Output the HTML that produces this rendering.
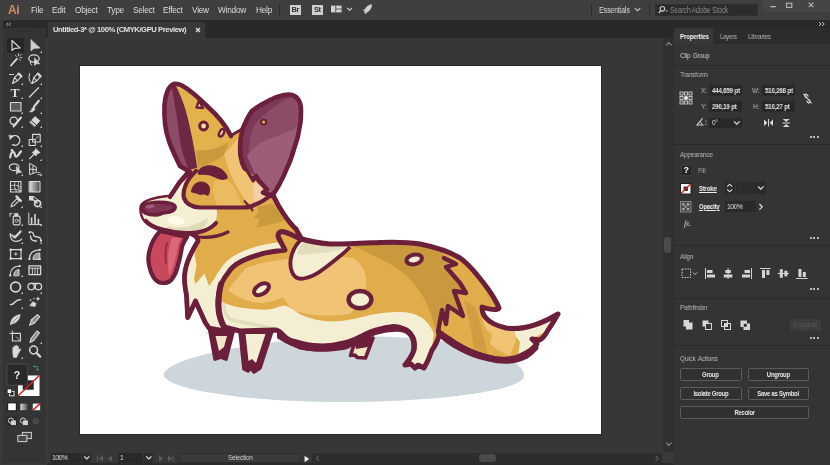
<!DOCTYPE html>
<html>
<head>
<meta charset="utf-8">
<title>Adobe Illustrator</title>
<style>
*{box-sizing:border-box;margin:0;padding:0}
html,body{width:830px;height:465px;overflow:hidden;background:#2a2a2a}
body{font-family:"Liberation Sans",sans-serif;color:#d6d6d6;position:relative}
.abs{position:absolute}
#app{position:absolute;left:0;top:0;width:830px;height:465px;overflow:hidden;background:#3a3a3a}
/* menu bar */
#menubar{left:0;top:0;width:830px;height:19.500px;background:#3f3f3f}
#menubar .mi{will-change:transform;position:absolute;top:5px;font-size:8.3px;line-height:10px;color:#dcdcdc;letter-spacing:-0.25px;white-space:nowrap}
#ailogo{will-change:transform;position:absolute;left:7.500px;top:2.500px;font-size:12px;line-height:15px;font-weight:bold;color:#d88a63;letter-spacing:-0.5px}
/* tabs row */
#tabrow{left:45.500px;top:19.500px;width:784.500px;height:18.500px;background:#292929}
#tab{left:2.500px;top:2.500px;width:157px;height:16px;background:#383838}
#tab span{will-change:transform;position:absolute;left:5px;top:3px;font-size:7.6px;line-height:9px;font-weight:bold;color:#e2e2e2;letter-spacing:-0.4px;white-space:nowrap}
/* canvas */
#canvas{left:48px;top:38px;width:615px;height:427px;background:#373737}
#artboard{left:80.400px;top:66px;width:520.700px;height:367.800px;background:#fff;box-shadow:0 0 0 1px #282828}
#vscroll{left:662.500px;top:38px;width:11.500px;height:414px;background:#303030}
#status{left:47px;top:452px;width:627px;height:13px;background:transparent}
/* toolbar */
#toolbar{left:3px;top:20px;width:42.600px;height:443px;background:#343434}
/* right panel */
#rpanel{left:674px;top:28px;width:156px;height:437px;background:#343434}

.t{will-change:transform;position:absolute;white-space:nowrap;font-size:7.4px;line-height:10px;letter-spacing:-0.2px;transform:scaleX(.86);transform-origin:0 50%}
.inp{position:absolute;background:#272727;border:1px solid #2a2a2a}
.sep{position:absolute;left:674px;width:156px;height:1px;background:#2a2a2a}
.btn{will-change:transform;position:absolute;border:1px solid #5c5c5c;border-radius:1.5px;background:#313131;color:#e6e6e6;font-size:7.4px;font-weight:bold;letter-spacing:-0.3px;text-align:center;line-height:11px;white-space:nowrap}
.dots{position:absolute;width:9px;height:3px}
.dots i{position:absolute;top:0;width:2.2px;height:2.2px;border-radius:50%;background:#e8e8e8}
</style>
</head>
<body>
<div id="app">
  <div id="menubar" class="abs">
    <div id="ailogo">Ai</div>
    <div class="mi" style="left:31px">File</div>
    <div class="mi" style="left:52px">Edit</div>
    <div class="mi" style="left:75px">Object</div>
    <div class="mi" style="left:107px">Type</div>
    <div class="mi" style="left:133px">Select</div>
    <div class="mi" style="left:163px">Effect</div>
    <div class="mi" style="left:192px">View</div>
    <div class="mi" style="left:218px">Window</div>
    <div class="mi" style="left:256px">Help</div>

    <div class="abs" style="left:279px;top:4px;width:1px;height:12px;background:#2c2c2c"></div>
    <div class="abs" style="left:289.5px;top:5px;width:10.5px;height:10px;background:#cfcfcf;color:#333;font-size:7.5px;font-weight:bold;line-height:10px;text-align:center;letter-spacing:-0.4px;will-change:transform">Br</div>
    <div class="abs" style="left:311.5px;top:5px;width:10.5px;height:10px;background:#cfcfcf;color:#333;font-size:7.5px;font-weight:bold;line-height:10px;text-align:center;letter-spacing:-0.4px;will-change:transform">St</div>
    <svg class="abs" style="left:329px;top:3px" width="48" height="14" viewBox="329 3 48 14">
      <rect x="331" y="5.6" width="4.4" height="6.8" fill="#d2d2d2"/>
      <rect x="336.2" y="5.6" width="5.4" height="3" fill="#d2d2d2"/>
      <rect x="336.2" y="9.4" width="5.4" height="3" fill="#d2d2d2"/>
      <path d="M347.2,8 L349.6,10.3 L352,8" fill="none" stroke="#d2d2d2" stroke-width="1.1"/>
      <path d="M372,4.2 C368.500,4.6 365.800,6.800 364.600,9.600 L362.200,10.200 L364.600,11 L365,12.600 L365.800,14.800 L366.800,12.400 C369.600,11.400 371.800,8.400 372,4.200 Z M365.600,10.200 L363.200,13.600 L366.400,11.600 Z" fill="#cfcfcf"/>
    </svg>
    <div class="abs" style="left:591px;top:4px;width:1px;height:12px;background:#2c2c2c"></div>
    <div class="mi" style="left:598.5px;color:#d8d8d8;transform:scaleX(.87);transform-origin:0 50%">Essentials</div>
    <svg class="abs" style="left:634px;top:7px" width="8" height="6" viewBox="0 0 8 6"><path d="M1,1.2 L3.6,3.800 L6.200,1.200" fill="none" stroke="#d2d2d2" stroke-width="1.1"/></svg>
    <div class="abs" style="left:648.5px;top:4px;width:1px;height:12px;background:#2c2c2c"></div>
    <div class="abs" style="left:654.5px;top:4px;width:103px;height:12px;background:#2b2b2b;border:1px solid #303030"></div>
    <svg class="abs" style="left:658px;top:5px" width="12" height="10" viewBox="0 0 12 10"><circle cx="4.400" cy="3.800" r="2.300" fill="none" stroke="#c8c8c8" stroke-width="1.100"/><path d="M2.800,5.600 L0.800,8" stroke="#c8c8c8" stroke-width="1.300" fill="none"/><path d="M7.600,5.600 L10,5.600 L8.800,7 Z" fill="#c8c8c8"/></svg>
    <div class="mi" style="left:669.5px;color:#8c8c8c;transform:scaleX(.82);transform-origin:0 50%">Search Adobe Stock</div>
    <div class="abs" style="left:762px;top:0;width:68px;height:11.500px;background:#454545"></div>
    <svg class="abs" style="left:762px;top:0" width="68" height="12" viewBox="762 0 68 12">
      <rect x="770.400" y="6" width="5.400" height="1.300" fill="#b8b8b8"/>
      <rect x="786.600" y="3.200" width="5.200" height="4.200" fill="none" stroke="#b8b8b8" stroke-width="1.100"/>
      <path d="M808.800,2.600 L813.400,7.200 M813.400,2.600 L808.800,7.200" stroke="#b8b8b8" stroke-width="1.100"/>
    </svg>
  </div>
  <div id="tabrow" class="abs">
    <div id="tab" class="abs"><span>Untitled-3* @ 100% (CMYK/GPU Preview)</span><svg class="abs" style="left:146.500px;top:5px" width="6" height="6" viewBox="0 0 6 6"><path d="M1,1 L5,5 M5,1 L1,5" stroke="#e2e2e2" stroke-width="1.200"/></svg></div>
  </div>
  <div id="canvas" class="abs"></div>
  <div id="artboard" class="abs"></div>
<svg id="corgi" class="abs" style="left:80px;top:66px" width="521" height="368" viewBox="80 66 521 368">
<defs>
  <clipPath id="cpBody"><path id="bodyP" d="M300,238.5 C294,236 288,232.5 282,231.5 C279,232 278,234 278,236 C280,241 283,246 285,250 C276,251 266,252 258,255 C251,257 246,259 242,261 C236,264 231,268 228,273 C224,278 221,283 220,289 C218,294 218,300 218,305 C218,312 220,320 224,327 L240,331 L276,330 C279,331 281,332 282,334 C287,339 293,344 300,347 C310,349 320,349.5 330,348 C337,347 344,345 350,342 C357,339 363,335 370,332 C376,330 383,328 390,327 C395,326 400,327 404,329 C407,330 410,332 412,336 C414,339 415,344 414,350 C412,356 408,361 405,365 L411,364 L415,368 L418,365 L424,368 C427,363 430,356 432,350 C435,346 438,340 440,333 L448,338 C452,341 458,345 464,348 C471,352 480,355 488,357 C494,359 501,360 508,359 C513,359 519,357 524,354 C528,352 533,349 537,344 L532,339 L540,340 C543,338 546,334 548,330 C551,326 554,321 558,314 C538,326 520,330 506,328 C498,326 490,323 486,318 C484,316 482,312 482,307 C488,309 497,311 499,308 C497,303 493,296 488,289 C480,278 470,265 460,258 C450,252 435,247 420,244 C410,242.5 395,242 380,242.5 C368,243 340,244.5 330,244 C318,243 308,241 300,238.5 Z"/></clipPath>
  <clipPath id="cpNeck"><path id="neckP" d="M192,168 L180,182 L170,197 C160,198 146,200 142,206 C141,212 143,218 146,221 C152,228 170,233 186,233 C195,233 198,238 198,241 C193,249 189,258 187.500,262 C185.500,268 184.500,274 184.500,278 C184.500,285 185.500,290 186.500,295 L187.700,317.500 L195.500,301 L205,322 L209,328 L232,332 L302,240 L296,229 C288,222 278,206 274,197 L256,168 Z"/></clipPath>
  <clipPath id="cpEarL"><path id="earLP" d="M174,84 C168,86 165,96 164.5,105 C164,116 165,130 169,141 C172,150 176,158 180,166 L192,172 L232,172 L232,136 C226,126 216,114 208,107 C200,99 190,90 182,85.5 C179,84 176,83.5 174,84 Z"/></clipPath>
  <clipPath id="cpEarR"><path id="earRP" d="M243,128 C246,121 249,115 252,111 C257,107 262,104 268,101 C273,98 279,96 284,95 C289,94 294,95 296.500,97.500 C300,101 301,105 301,110 C301,115 301,120 300,125 C299,133 297,141 294,149 C292,156 290,162 287,168 C283,178 278,188 272,196 L263,192.500 L267,189.500 L262.500,184.500 L259,181 L256,176 L253,180 C249,176 247,173 245.500,170 C242,164 241,160 240.500,156 C240,150 240,145 240.500,140 C241,136 242,132 243,128 Z"/></clipPath>
</defs>
<!-- shadow -->
<path d="M163.500,374 C168,364 195,355.500 230,349 C270,342 310,337 360,336.500 C420,336 470,343 500,355 C515,361 524,368 524,376 C524,390 440,402 344,402 C250,402 163.500,390 163.500,374 Z" fill="#ccd6db"/>
<!-- far legs -->
<path d="M209,326 L215,359 L221,357 L226,359 L234,328 Z" fill="#6b1f3b" stroke="#6b1f3b" stroke-width="3.6" stroke-linejoin="round"/>
<path d="M215.5,336 L219,351 L224,347 L227,336 Z" fill="#efe6c6"/>
<path d="M356,338 L350.500,355.500 L354.500,355 L357.500,357.500 L365.500,358 L373,338 Z" fill="#efe6c6" stroke="#6b1f3b" stroke-width="3.600" stroke-linejoin="round"/>
<path d="M353,338 L356,349 L368,347 L374,338 Z" fill="#6b1f3b"/>
<!-- neck / chest fur -->
<use href="#neckP" fill="#e0ad4a" stroke="#6b1f3b" stroke-width="4.2" stroke-linejoin="round"/>
<g clip-path="url(#cpNeck)">
  <path d="M257,207 L272,203.500 L287,220 L278,222.500 L266,225.500 L256.500,227.500 L260,218.500 L253.500,218 L258.500,212.500 Z" fill="#c9993d"/>
  <path d="M197,243 L194.500,254 L196.500,265.500 L194,279 L195.500,284 L204.500,273.500 L209,286 L214,279 L214,296 L212,310 L224,334 L176,334 L174,280 L188,245 Z" fill="#f4eed3"/>
  <path d="M285,250 C276,251 266,252 258,255 C251,257 246,259 242,261 C236,264 231,268 228,273 C224,278 221,283 220,289 C218,294 218,300 218,305 C218,312 220,320 224,327" fill="none" stroke="#f4eed3" stroke-width="17"/>
</g>
<use href="#neckP" fill="none" stroke="#6b1f3b" stroke-width="4.800" stroke-linejoin="round"/>
<!-- tongue -->
<path d="M160,231 C154,238 151,244 150,249 C148,255 148,260 149,265 C150,271 152,275 154,278 C157,282 160,283 163,283 C167,283 170,282 172,279 C175,275 177,270 178,265 C180,259 181,253 182,247 C183,243 185,240 187,237 Z" fill="#c8495c" stroke="#6b1f3b" stroke-width="4.2" stroke-linejoin="round"/>
<path d="M172,238 C168,248 167,262 169,275 C173,270 176,258 178,246 C179,242 180,240 182,238 Z" fill="#dd6877"/>
<path d="M167,243 C165,251 165,257 166,263" fill="none" stroke="#8e2f47" stroke-width="1.8" stroke-linecap="round"/>
<!-- body -->
<use href="#bodyP" fill="#e0ad4a"/>
<g clip-path="url(#cpBody)">
  <path d="M346,243 C362,250 380,258 395,267 C412,278 426,296 432,318 L438,336 L442,310 L446,324 L448,306 L463,316 L454,291 L466,293 L460,283 L446,267 L456,264 L444,258 L440,244 L380,236 Z" fill="#c9993d"/>
  
  <path d="M246,268 C240,275 232,284 228,290 C236,297 250,302.500 260.600,302.800 C268,303 278,300.500 282.500,297 L284,298.500 C286,301 288,305 291,308.700 C295,311 302,313 311,314.600 C320,316 335,316 350,313.700 C356,308 364,298 366,286 C368,275 362,262 352,258 C330,254 290,257 268,262 C258,264 250,266 246,268 Z" fill="#f1c374"/>
  <path d="M212,294 L224,303 C232,306 238,307.500 244,308 C252,309 262,310 268,309.500 C274,309 280,306 284,305.500 C290,306 296,313 304,316 C312,319 320,321 330,321.500 C345,321.500 358,318 370,315 C385,312 400,311 410,313 C424,316 430,324 434,334 L428,372 L400,372 L330,358 L250,345 L214,338 Z" fill="#f4eed3"/>
  <path d="M223.500,304 C224,312 226,317 231,319.500 C240,322.500 255,324 278,329.500" fill="none" stroke="#e4dec0" stroke-width="3.600" stroke-linecap="round"/>
  <path d="M464,300 L476,308 L488,354 L474,349 C472,332 468,314 464,300 Z" fill="#d09e40"/>
  <!-- tail tip -->
  <path d="M516,322 L514,334 L520,342 L518,356 L545,346 L532,339 L548,330 L562,310 Z" fill="#f4eed3"/>
  <path d="M482,318 L486,330 L492,334 L490,344 L498,350 L510,356 L516,340 L514,326 L500,326 Z" fill="#f1c374"/>
</g>
<!-- saddle -->
<path d="M302,239 C297,243 294,248 292,254 C290,260 290,267 292,272 C294,277 298,279.5 304,278.5 C311,277 317,274 322,270 C329,265 335,260 340,256 C344,253 347,250 350,247" fill="#f4eed3" stroke="#6b1f3b" stroke-width="3.8" stroke-linejoin="round"/>
<path d="M304,242 C300,246 298,250 297,254 C310,255 330,253 346,248 C330,246 315,244 304,242 Z" fill="#e2dcbc"/>
<!-- tail fur zigzag -->
<path d="M444,258 L456,264 L446,267 L460,283 L466,293 L454,291 L463,316 L448,306 L446,324 L442,310 L438,332" fill="none" stroke="#6b1f3b" stroke-width="4.400" stroke-linejoin="round" stroke-linecap="round"/>
<use href="#bodyP" fill="none" stroke="#6b1f3b" stroke-width="5" stroke-linejoin="round"/>
<!-- thick underside overlays -->
<path d="M277,330 C284,335 290,338 297,339.600 C303,341.500 308,342.500 313.700,343 C320,343.500 325,343.500 330.600,343 C337,342 342,341 347.500,339.600 C353,337.500 358,335.500 364,333 C370,330.500 375,328.500 381,327 C387,325.800 392,325.300 398,325.300 C404,326 409,328 412,332 C416,337 417,344 416,351 C414,357 411,362 408,366 L403,366 C407,361 410,356 411,351 C412,345 411,340 409,337 C407,334 404,332.500 400,332 C394,331.500 388,332.300 381,333.700 C375,335 370,337 364,340 C358,343 352,346.500 347.500,349 C342,350.500 337,351 330.600,351.400 C325,351.800 320,351.800 313.700,351.400 C308,350.800 303,349.800 297,348 C291,346 285,343.500 277,338 Z" fill="#6b1f3b"/>
<path d="M440,333.500 C446,339 452,343.500 460,347.500 C469,352.500 479,356 488,358 C495,359.800 502,360.600 508,360.400 C514,360 520,358.500 525,356 C529,353.500 532,351 535,347.500" fill="none" stroke="#6b1f3b" stroke-width="6.800" stroke-linecap="round"/>
<path d="M221,284 C219,291 218.500,298 218.500,305 C218.500,313 220.500,321 224.500,328" fill="none" stroke="#6b1f3b" stroke-width="6" stroke-linecap="round"/>
<!-- spots -->
<ellipse cx="261.500" cy="289.200" rx="8.200" ry="4.800" transform="rotate(-32 261.500 289.200)" fill="#f4eed3" stroke="#6b1f3b" stroke-width="4"/>
<ellipse cx="360" cy="299.600" rx="11.400" ry="8.600" fill="#f4eed3" stroke="#6b1f3b" stroke-width="4.400"/>
<ellipse cx="414.200" cy="259.400" rx="7.800" ry="4.800" transform="rotate(-12 414.200 259.400)" fill="#f4eed3" stroke="#6b1f3b" stroke-width="4"/>
<!-- near front leg -->
<path d="M240,331 L244,369 L248,371 L251,368 L254,372 L260,368 L272,331 Z" fill="#6b1f3b" stroke="#6b1f3b" stroke-width="3.6" stroke-linejoin="round"/>
<path d="M245.5,334 L248.5,361 L252,359 L256,363 L265.5,334 Z" fill="#f4eed3"/>
<!-- back leg cream -->
<path d="M418,330 C420,338 420,346 418,352 L414,361 L420,363 L428,352 C431,344 432,338 431,330 Z" fill="#f4eed3"/>
<!-- ears -->
<use href="#earLP" fill="#6e2745" />
<g clip-path="url(#cpEarL)">
  <path d="M172,88 C174,100 177,115 180,141 C182,152 185,160 188,168 L176,168 L160,130 L162,90 Z" fill="#8c4c68"/>
  <path d="M176,86 C182,98 187,112 190,128 C193,142 196,156 198,175 L236,175 L234,136 L208,106 L186,88 Z" fill="#e2b24c"/>
  <path d="M196,150 C208,152 220,148 232,140 L234,176 L198,176 C198,168 197,158 196,150 Z" fill="#c9993d"/>
</g>
<use href="#earRP" fill="#8c4c68"/>
<g clip-path="url(#cpEarR)">
  <path d="M240,126 C250,110 268,98 290,92 L300,94 C282,100 266,110 254,126 C249,136 248,150 250,162 L256,178 L238,176 Z" fill="#7a3a57"/>
  <path d="M247,156 C252,148 261,142 269,139 C280,135 291,131 302,124 L303,140 L276,199 L262,192 L256,176 Z" fill="#9d5d78"/>
</g>
<!-- ear spots -->
<path d="M199,100.5 L203,108 L196.5,107.5 Z" fill="#f6dfa2" stroke="#6b1f3b" stroke-width="2.4" stroke-linejoin="round"/>
<circle cx="203.600" cy="126" r="3.900" fill="#f6dfa2" stroke="#6b1f3b" stroke-width="3"/>
<ellipse cx="221.6" cy="132.8" rx="2.2" ry="4" transform="rotate(28 221.6 132.8)" fill="#f6dfa2" stroke="#6b1f3b" stroke-width="2.4"/>
<!-- forehead / head gold fill -->
<path d="M188,170 C200,168 215,162 224,155 L231,135 L243,128 L240,150 L246,172 L256,176 L263,184 L267,189.500 L263,192.500 L272,196 L256,207 L200,207 L184,198 Z" fill="#e0ad4a"/>
<!-- light region: between ears down the cheek -->
<path d="M242,130 C238,139 232,147 224,154 C226,162 230,172 236,184 C240,192 245,200 250,206 L262,201 L271,195.500 L263,192.500 L267,189.500 L262.500,184.500 L259,181 L256,176 L253,180 C249,176 247,173 245.500,170 C242,164 241,160 240.500,156 C240,150 240,145 240.500,140 C241,136 241.500,133 242,130 Z" fill="#f1c374"/>
<!-- peach -->
<path d="M247,190 C248,196 249,201 251,206 L262,201 L271,195.500 L263,192.500 L267,189.500 L262.500,184.500 L259,181 L253,184 Z" fill="#f3cfa4"/>
<path d="M231,135.500 L243,128.500" fill="none" stroke="#6b1f3b" stroke-width="3" stroke-linecap="round"/>
<path d="M174,84 C168,86 165,96 164.5,105 C164,116 165,130 169,141 C172,150 176,158 180,166 L190,172" fill="none" stroke="#6b1f3b" stroke-width="4.600" stroke-linejoin="round" stroke-linecap="round"/>
<path d="M174,84 C176,83.5 179,84 182,85.5 C190,90 200,99 208,107 C216,114 226,126 231,136" fill="none" stroke="#6b1f3b" stroke-width="4.600" stroke-linecap="round"/>
<use href="#earRP" fill="none" stroke="#6b1f3b" stroke-width="4.600" stroke-linejoin="round"/>
<circle cx="263.6" cy="122" r="2.6" fill="#e2b24c" stroke="#6b1f3b" stroke-width="2"/>
<!-- muzzle cream -->
<path d="M193,171 C186,178 182,188 183,198 C186,204 192,207 200,207.500 L216.500,207.500 C217.500,213 217,219 215,223.500 C209,230 197,234 186,233 C170,233 152,228 146,221 C143,218 141,212 142,206 C146,200 160,198 170,197 L180,182 Z" fill="#f4eed3"/>
<path d="M168,226 C178,229 192,228 208,218 C208,224 204,228 198,230.500 C188,233 176,232 166,229.500 Z" fill="#e0dab8"/><ellipse cx="176" cy="220.500" rx="8.500" ry="4" transform="rotate(8 176 220.500)" fill="#fdfbea"/>
<!-- face mask fill -->
<path d="M196,171 C187,179 182,190 184,198 C186,204 192,207 200,207.500 L242,207.500 C248,207.500 252,206.500 254,205 L252,186 L246,174 L224,157 Z" fill="#e0ad4a"/>
<path d="M225,158 C228,168 232,178 237,187 C241,194 245,200 249,206 L254,205 L253,184 L246,172 Z" fill="#f1c374"/>
<path d="M215,181 C221,177 229,180 233,186 C237,192 240,200 242,206.500 L218,206.500 C213,198 211,187 215,181 Z" fill="#ebbb62"/>
<path d="M196,171 C187,179 182,190 184,198 C186,204 192,207 200,207.500 L242,207.500 C248,207.500 252,206.500 254,205 C260,203 267,198.500 272,194" fill="none" stroke="#6b1f3b" stroke-width="4.200" stroke-linejoin="round" stroke-linecap="round"/>
<path d="M244,200.500 L249,206 L252.500,210.500 L250,205" fill="#6b1f3b" stroke="#6b1f3b" stroke-width="2" stroke-linejoin="round"/>
<!-- head outline left -->
<path d="M190,172 L180,182 L170,197" fill="none" stroke="#6b1f3b" stroke-width="4.2" stroke-linecap="round"/>
<!-- mouth line -->
<path d="M146,221 C152,228 170,233 186,233 C198,234 210,230 216,223" fill="none" stroke="#6b1f3b" stroke-width="4.2" stroke-linecap="round"/>
<path d="M198,237 C208,238 220,236 228,232" fill="none" stroke="#6b1f3b" stroke-width="3.2" stroke-linecap="round"/>
<!-- nose -->
<path d="M142.500,208.500 C142.500,204.800 148,202.600 158,202.200 C168,202 175.200,203.800 175.200,207.300 C175.200,210.500 170,212.300 164.500,212.800 C161,213.200 160,215 155,215 C147,215 142.500,212.300 142.500,208.500 Z" fill="#7d3553" stroke="#6b1f3b" stroke-width="3.600"/>
<ellipse cx="150" cy="206.400" rx="4.600" ry="2" transform="rotate(-8 150 206.400)" fill="#9c5c78"/>
<!-- eye & brow -->
<path d="M191.5,192 C192,186 196,182 201,182 C206,182 209.5,185 209.5,189 C209.5,192 209,194 208,195.5 C206,194 203,193.5 200,194.5 C197,193 194,192.5 191.5,192 Z" fill="#6b1f3b" stroke="#6b1f3b" stroke-width="1" stroke-linejoin="round"/>
<path d="M198,171 C201,166 208,164 215,166 C222,168 227,173 228,178 C224,181 220,180 216,178 C211,175 205,174 199,175 C197.500,174 197.500,172 198,171 Z" fill="#6b1f3b"/>
</svg>

  <div id="vscroll" class="abs">
    <svg class="abs" style="left:2px;top:3px" width="8" height="6" viewBox="0 0 8 6"><path d="M1,4.400 L3.800,1.600 L6.600,4.400" fill="none" stroke="#8c8c8c" stroke-width="1.100"/></svg>
    <div class="abs" style="left:1.500px;top:199px;width:7px;height:16px;border-radius:3px;background:#4a4a4a"></div>
    <svg class="abs" style="left:2px;top:403px" width="8" height="6" viewBox="0 0 8 6"><path d="M1,1.600 L3.800,4.400 L6.600,1.600" fill="none" stroke="#8c8c8c" stroke-width="1.100"/></svg>
  </div>
  <div id="status" class="abs">
    <div class="abs" style="left:0;top:11px;width:627px;height:2px;background:#2b2b2b"></div>
    <div class="abs" style="left:4px;top:1.400px;width:30px;height:9.400px;background:#292929"></div>
    <div class="t" style="left:5.400px;top:1.400px;color:#e4e4e4">100%</div>
    <div class="abs" style="left:35px;top:1.400px;width:8.500px;height:9.400px;background:#2c2c2c"></div>
    <svg class="abs" style="left:35.500px;top:3.400px" width="8" height="6" viewBox="0 0 8 6"><path d="M1.200,1.400 L3.800,4 L6.400,1.400" fill="none" stroke="#e0e0e0" stroke-width="1.200"/></svg>
    <svg class="abs" style="left:48px;top:2px" width="82" height="9" viewBox="95 454 82 9">
      <g fill="#5c5c5c"><rect x="97" y="455.600" width="1" height="5.800"/><path d="M103,455.600 L99,458.500 L103,461.400 Z"/><path d="M112,455.600 L108,458.500 L112,461.400 Z"/>
      <path d="M159,455.600 L163,458.500 L159,461.400 Z"/><path d="M168,455.600 L172,458.500 L168,461.400 Z"/><rect x="172.600" y="455.600" width="1" height="5.800"/></g>
    </svg>
    <div class="abs" style="left:71px;top:1.400px;width:25px;height:9.400px;background:#292929"></div>
    <div class="t" style="left:73px;top:1.400px;color:#e4e4e4">1</div>
    <div class="abs" style="left:97px;top:1.400px;width:8.500px;height:9.400px;background:#2c2c2c"></div>
    <svg class="abs" style="left:97.500px;top:3.400px" width="8" height="6" viewBox="0 0 8 6"><path d="M1.200,1.400 L3.800,4 L6.400,1.400" fill="none" stroke="#e0e0e0" stroke-width="1.200"/></svg>
    <div class="abs" style="left:132px;top:1px;width:122px;height:10px;background:#3a3a3a;border:1px solid #2e2e2e"></div>
    <div class="t" style="left:181px;top:1.400px;color:#d2d2d2">Selection</div>
    <svg class="abs" style="left:256px;top:2.500px" width="8" height="8" viewBox="0 0 8 8"><path d="M1.600,0.800 L6.200,4 L1.600,7.200 Z" fill="#f0f0f0"/></svg>
    <div class="abs" style="left:265px;top:1px;width:350px;height:10px;background:#2d2d2d"></div>
    <svg class="abs" style="left:268px;top:3px" width="6" height="7" viewBox="0 0 6 7"><path d="M3.800,1 L1.400,3.400 L3.800,5.800" fill="none" stroke="#7c7c7c" stroke-width="1"/></svg>
    <div class="abs" style="left:432px;top:2px;width:16.500px;height:7.500px;border-radius:3px;background:#4a4a4a"></div>
    <svg class="abs" style="left:607px;top:3px" width="6" height="7" viewBox="0 0 6 7"><path d="M1.800,1 L4.200,3.400 L1.800,5.800" fill="none" stroke="#7c7c7c" stroke-width="1"/></svg>
  </div>
  <div id="toolbar" class="abs"></div>
<svg id="tools" class="abs" style="left:0;top:20px;will-change:transform" width="47" height="445" viewBox="0 20 47 445">
<defs>
  <linearGradient id="gg" x1="0" x2="1" y1="0" y2="0"><stop offset="0" stop-color="#e0e0e0"/><stop offset="1" stop-color="#4a4a4a"/></linearGradient>
  <path id="fly" d="M0,0 L0,-2.200 L-2.200,0 Z"/>
</defs>
<!-- header -->
<rect x="3" y="20" width="42.600" height="8" fill="#2a2a2a"/>
<path d="M8,22.800 L6.500,24.300 L8,25.800 M10.600,22.800 L9.100,24.300 L10.600,25.800" fill="none" stroke="#bdbdbd" stroke-width="0.900"/>
<rect x="17" y="31" width="16" height="1" fill="#2c2c2c"/>
<!-- selected bg -->
<rect x="7" y="38" width="17" height="14.500" rx="1" fill="#262626"/>
<g fill="#b8b8b8">
  <use href="#fly" x="42" y="53"/><use href="#fly" x="23" y="85"/><use href="#fly" x="42" y="85"/>
  <use href="#fly" x="23" y="99"/><use href="#fly" x="42" y="99"/><use href="#fly" x="23" y="114"/><use href="#fly" x="42" y="114"/>
  <use href="#fly" x="23" y="128"/><use href="#fly" x="42" y="128"/><use href="#fly" x="23" y="147"/><use href="#fly" x="42" y="147"/>
  <use href="#fly" x="23" y="161"/><use href="#fly" x="42" y="161"/><use href="#fly" x="23" y="176"/><use href="#fly" x="42" y="176"/>
  <use href="#fly" x="23" y="208"/><use href="#fly" x="42" y="208"/><use href="#fly" x="23" y="226"/><use href="#fly" x="42" y="226"/>
  <use href="#fly" x="23" y="244"/><use href="#fly" x="42" y="244"/><use href="#fly" x="23" y="277"/>
  <use href="#fly" x="23" y="294"/><use href="#fly" x="42" y="294"/><use href="#fly" x="23" y="309"/><use href="#fly" x="42" y="344"/><use href="#fly" x="23" y="359"/>
</g>
<g fill="none" stroke="#d8d8d8" stroke-width="1.200" stroke-linejoin="round" stroke-linecap="round">
  <!-- selection -->
  <path d="M12,40.500 L12,50.500 L14.800,48.300 L20,48 Z"/>
  <!-- direct selection -->
  <path d="M31,40 L31,50.800 L34,48.300 L39.600,48 Z" fill="#d0d0d0" stroke="#d0d0d0" stroke-width="0.800"/>
  <!-- magic wand -->
  <path d="M11,65.500 L16.800,58.800" stroke-width="1.800"/>
  <path d="M18.600,53.800 V55.800 M20.200,57.600 H21.800 M15.600,55.400 L16.600,56.400 M20.400,55.400 L21.400,54.400 M19.400,59.400 L20.400,60.400" stroke-width="0.900"/>
  <!-- lasso + arrow -->
  <ellipse cx="34" cy="58.500" rx="5.200" ry="3.600" stroke-width="1.300"/>
  <path d="M30.500,61 Q29.500,63.500 31.500,65" stroke-width="1"/>
  <path d="M34.500,58 L34.500,65.500 L36.500,63.800 L39.500,63.800 Z" fill="#d8d8d8" stroke-width="0.600"/>
  <!-- pen -->
  <path d="M12.500,83.500 L14.500,77.500 L18.600,73.600 L21.400,76.400 L17.500,80.800 Z M14.500,77.500 L17.500,80.800" stroke-width="1.100"/>
  <path d="M18.600,73.600 L21.400,76.400" stroke-width="2.200"/>
  <path d="M9.500,74.500 H13.500" stroke-width="1.200"/>
  <!-- curvature -->
  <path d="M32,83.500 L33.800,77.500 L37.800,73.600 L40.600,76.400 L36.800,80.800 Z M33.800,77.500 L36.800,80.800" stroke-width="1.100"/>
  <path d="M37.800,73.600 L40.600,76.400" stroke-width="2.200"/>
  <path d="M29.600,73.500 Q28,78 30,81.500 Q31,83 32,83.500" stroke-width="1"/>
  <!-- line -->
  <path d="M29.500,97 L38.500,87.800" stroke-width="1.300"/>
  <!-- rectangle -->
  <rect x="10.500" y="102.500" width="10.500" height="8.500" fill="#5c5c5c" stroke-width="1.100"/>
  <!-- brush -->
  <path d="M38.800,100.800 L34,106.600" stroke-width="2.200"/>
  <path d="M33.800,107 C32.500,107.500 31.500,108.500 31.500,110 C31,111 30,111.600 29.400,111.800 C31.500,112.500 34.500,111.500 35,108.500 Z" fill="#d8d8d8" stroke-width="0.500"/>
  <!-- shaper -->
  <circle cx="13.800" cy="120.800" r="3.700" stroke-width="1.300"/>
  <path d="M13.500,126.500 L21,117.500" stroke-width="2"/>
  <!-- eraser -->
  <path d="M29.800,122 L35,116.500 L40,120.800 L34.800,126.500 Z" fill="#d8d8d8" stroke-width="0.600"/>
  <path d="M31.200,120.600 L36.200,125" stroke="#383838" stroke-width="1"/>
  <!-- rotate -->
  <path d="M11.400,137.200 A4.800,4.800 0 1 1 12.600,144.600" stroke-width="1.300"/>
  <path d="M9.200,135.200 L13.400,135.800 L10.200,139.400 Z" fill="#d8d8d8" stroke-width="0.500"/>
  <!-- scale -->
  <rect x="29.200" y="139.500" width="6" height="6" stroke-width="1.100"/>
  <rect x="32.600" y="134.400" width="7.600" height="7.600" stroke-width="1.100"/>
  <path d="M35.200,139.400 L38.600,136" stroke-width="0.900"/>
  <!-- warp -->
  <path d="M10.200,157.500 C10.500,154 12,151.500 13.500,152 C15.500,152.500 14,156 16,156.500 C18,157 19,153 21,151.500" stroke-width="2.200"/>
  <circle cx="12" cy="150.200" r="1.300" fill="#d8d8d8" stroke="none"/>
  <!-- pin -->
  <path d="M35.800,148.500 L40.200,152.800 L37.800,153.400 L35.800,156 L32.200,152.400 L34.800,150.600 Z" fill="#d8d8d8" stroke-width="0.600"/>
  <path d="M33.600,154.600 L29.600,158.600" stroke-width="1.300"/>
  <!-- shape builder -->
  <ellipse cx="14.200" cy="167.200" rx="4.800" ry="3.400" stroke-width="1.200"/>
  <path d="M16.400,166.500 L16.400,174 L18.400,172.400 L21.400,172.400 Z" fill="#d8d8d8" stroke-width="0.600"/>
  <!-- perspective grid -->
  <path d="M29.600,163.600 L29.600,174.600 L36.400,172.200 L36.400,167.600 Z M29.600,169 L36.400,169.800 M33,165.800 L33,173.400" stroke-width="1"/>
  <path d="M37.600,174.600 H41 M37.600,172.600 H40" stroke-width="0.800"/>
  <!-- mesh -->
  <rect x="10.500" y="181.500" width="10.500" height="10.500" stroke-width="1.100"/>
  <path d="M10.500,186 Q15.500,183.500 21,187.500 M14.800,181.500 Q13,186.500 16.500,192 M10.500,189.500 Q15,188 21,190.800 M18.400,181.500 Q17.500,186 19.500,192" stroke-width="0.800"/>
  <!-- gradient -->
  <rect x="29.500" y="181.500" width="10.500" height="10.500" fill="url(#gg)" stroke-width="1"/>
  <!-- eyedropper -->
  <path d="M11,206.800 L11.800,203.800 L17,198.600 L19,200.600 L13.800,205.800 Z" stroke-width="1.100"/>
  <path d="M16.400,196.400 L20.800,200.800" stroke-width="2.400"/>
  <!-- blend -->
  <rect x="29" y="196" width="4.500" height="4.500" fill="#d8d8d8" stroke="none"/>
  <circle cx="37.600" cy="203.600" r="3" stroke-width="1.600"/>
  <path d="M31,198 L37,203" stroke-width="1.600"/><path d="M33.400,196.400 L39.800,201.400" stroke-width="1"/>
  <!-- symbol sprayer -->
  <rect x="13.200" y="216.200" width="6.800" height="8.600" rx="1.200" stroke-width="1.200"/>
  <rect x="14.600" y="213.400" width="3.400" height="2.600" fill="#d8d8d8" stroke-width="0.500"/>
  <circle cx="16.600" cy="220.600" r="1.500" stroke-width="0.900"/>
  <path d="M10,213.600 H12 M10,213.600 V216.400" stroke-width="0.900"/>
  <!-- column graph -->
  <path d="M28.800,213 V224.600 H41" stroke-width="1"/>
  <rect x="30.800" y="217.500" width="1.600" height="6.500" fill="#d8d8d8" stroke="none"/>
  <rect x="34.200" y="214" width="1.600" height="10" fill="#d8d8d8" stroke="none"/>
  <rect x="37.600" y="218.800" width="1.600" height="5.200" fill="#d8d8d8" stroke="none"/>
  <!-- row 237 -->
  <path d="M20.500,231.500 L15,237.500" stroke-width="2.200"/>
  <path d="M10.200,234 C10,238.500 12.500,242 17.500,241.200 C19.500,241 21,240 21.500,239" stroke-width="1.300"/>
  <path d="M10.200,234 L13.500,237.800 L15.400,236.400 Z" fill="#d8d8d8" stroke-width="0.500"/>
  <path d="M29.400,232.600 C31.500,231 33.500,232.500 33.500,234.500 C33.500,236.500 35.500,236.800 37.500,237 C39.500,237.200 41,238.500 41,240.500" stroke-width="1.300"/>
  <path d="M30.500,236 C30.500,239.500 33,241.200 36.500,241" stroke-width="1.300"/>
  <rect x="28.600" y="231.400" width="1.800" height="1.800" fill="#d8d8d8" stroke="none"/><rect x="40" y="240" width="1.800" height="1.800" fill="#d8d8d8" stroke="none"/>
  <!-- row 254: free transform / reshape -->
  <rect x="10.600" y="249.600" width="10.400" height="9" stroke-width="1.100"/>
  <g fill="#d8d8d8" stroke="none"><rect x="9.600" y="248.600" width="2.200" height="2.200"/><rect x="19.800" y="248.600" width="2.200" height="2.200"/><rect x="9.600" y="257.400" width="2.200" height="2.200"/><rect x="19.800" y="257.400" width="2.200" height="2.200"/></g>
  <path d="M14.600,254 H17 M15.800,252.800 V255.200" stroke-width="0.900"/>
  <path d="M29.400,259 C29.400,253.500 32.500,250 39.800,249.800" stroke-width="1.200"/>
  <path d="M33,259 C33,255.500 35,253.200 39.800,253 L39.800,259 Z" fill="#9a9a9a" stroke-width="1"/>
  <g fill="#d8d8d8" stroke="none"><rect x="28.400" y="258" width="2" height="2"/><rect x="38.800" y="248.800" width="2" height="2"/><rect x="38.800" y="258" width="2" height="2"/></g>
  <!-- row 270 -->
  <path d="M10.200,275.400 C10.200,270 13,266.400 19.600,266" stroke-width="1.200"/>
  <path d="M13.800,275.400 C13.800,272 15.500,270 19,269.600 L19,275.400 Z" fill="#9a9a9a" stroke-width="1"/>
  <g fill="#d8d8d8" stroke="none"><rect x="9.200" y="274.400" width="2" height="2"/><rect x="18.600" y="265" width="2" height="2"/></g>
  <rect x="29" y="265.800" width="11.600" height="8.800" stroke-width="1.300"/>
  <path d="M29,268.200 H40.600 M32.400,268.200 V274.600 M35,268.200 V274.600 M37.600,268.200 V274.600" stroke-width="0.900"/>
  <!-- row 287 -->
  <circle cx="15.600" cy="287" r="4.900" stroke-width="1.700"/>
  <rect x="28" y="283.400" width="6.400" height="6.400" rx="3.200" stroke-width="1.300"/>
  <rect x="35.200" y="283.400" width="6.400" height="6.400" rx="3.200" stroke-width="1.300"/>
  <path d="M31,283.400 H38.500" stroke-width="1.300"/>
  <!-- row 302 -->
  <path d="M10.400,304.600 C13,304.600 14,303.500 15,302 C16,300.500 17.500,299.800 20.800,299.600" stroke-width="1.400"/>
  <path d="M29.800,305.400 L32.600,301.800 L36.200,303.400 L35,306.600 Z" fill="#d8d8d8" stroke-width="0.500"/>
  <path d="M38,297.200 L39.600,298.800 L38,300.400 L36.400,298.800 Z" fill="#d8d8d8" stroke-width="0.400"/>
  <rect x="29.800" y="299.400" width="1.400" height="1.400" fill="#d8d8d8" stroke="none"/><rect x="33.400" y="298" width="1.200" height="1.200" fill="#d8d8d8" stroke="none"/>
  <!-- row 320 -->
  <path d="M10.400,324.800 C10.400,319.500 14,315.500 20.200,314.600 C19.600,320 16,323.600 11.600,324 Z" fill="#d8d8d8" stroke-width="0.600"/>
  <path d="M12.500,322.500 L18,317" stroke="#6a6a6a" stroke-width="0.700"/>
  <path d="M29.600,325.200 L31.400,320 L37.400,314.600 L39.600,316.800 L34.400,323.200 Z" stroke-width="1.100" fill="#8a8a8a"/>
  <path d="M31.400,320 L34.400,323.200" stroke-width="1"/>
  <!-- row 337 -->
  <rect x="12.400" y="333.400" width="8" height="7.600" stroke-width="1.100"/>
  <path d="M9.800,333.400 H12.400 M12.400,330.800 V333.400" stroke-width="1"/>
  <path d="M20.400,341 L16.500,337" stroke-width="0.800"/>
  <path d="M30,342.600 L31,338.600 L37,331 L39.400,333 L33.600,340.600 Z" stroke-width="1.100" fill="#8a8a8a"/>
  <!-- hand -->
  <path d="M12.800,352 L12.800,347.800 C12.800,346.800 14.200,346.800 14.200,347.800 L14.200,346.400 C14.200,345.400 15.700,345.400 15.700,346.400 L15.700,346 C15.700,345 17.200,345 17.200,346 L17.200,346.800 C17.200,345.900 18.600,345.900 18.600,346.800 L18.600,350 L19.600,349 C20.400,348.400 21.200,349.200 20.600,350 L18.400,353.600 C17.600,355.200 17,356.400 16.600,357.400 L13.400,357.400 C13,355.400 12.800,353.600 12.800,352 Z" fill="#d8d8d8" stroke-width="0.500"/>
  <!-- zoom -->
  <circle cx="33.600" cy="350" r="3.900" stroke-width="1.500"/>
  <path d="M36.600,353 L40.200,356.600" stroke-width="2.200"/>
</g>
<!-- Type T -->
<text x="10.400" y="97" font-family="Liberation Serif, serif" font-size="13.500" font-weight="bold" fill="#d8d8d8">T</text>
<!-- fill / stroke -->
<rect x="7" y="364" width="20.500" height="21" fill="#2a2a2a" stroke="#4a4a4a" stroke-width="0.800"/>
<text x="13.800" y="379" font-family="Liberation Sans, sans-serif" font-size="10.500" font-weight="bold" fill="#f0f0f0">?</text>
<path d="M33.500,366.500 H37.500 V370.500 M33.500,366.500 l1.400,-1.300 M33.500,366.500 l1.400,1.300 M37.500,370.500 l-1.300,-1.400 M37.500,370.500 l1.300,-1.400" fill="none" stroke="#3f8a86" stroke-width="0.900"/>
<path d="M18,375.500 H39.500 V396 H18 Z M22.800,380.500 V389.500 H33.500 V380.500 Z" fill="#ffffff" fill-rule="evenodd"/>
<rect x="22.800" y="380.500" width="10.700" height="9" fill="#2a2a2a"/>
<rect x="7" y="364" width="20.500" height="21" fill="#2a2a2a" stroke="#4a4a4a" stroke-width="0.800"/>
<text x="13.800" y="379" font-family="Liberation Sans, sans-serif" font-size="10.500" font-weight="bold" fill="#f0f0f0">?</text>
<path d="M18.200,395.800 L39.600,375.200" stroke="#e01f26" stroke-width="1.500"/>
<!-- default fill/stroke -->
<rect x="9.600" y="391.400" width="4.400" height="4.400" fill="#1c1c1c" stroke="#e8e8e8" stroke-width="1"/>
<rect x="7.200" y="389" width="4.400" height="4.400" fill="#f4f4f4" stroke="#1c1c1c" stroke-width="0.600"/>
<!-- color mode buttons -->
<rect x="7.200" y="402.400" width="9.600" height="8.800" fill="#1e1e1e"/>
<rect x="8.200" y="403.400" width="7.600" height="6.800" fill="#ffffff"/>
<rect x="20" y="403.200" width="8" height="7.400" fill="url(#gg)" stroke="#2a2a2a" stroke-width="0.600"/>
<rect x="32.400" y="403.200" width="8" height="7.400" fill="#ffffff" stroke="#2a2a2a" stroke-width="0.600"/>
<path d="M32.600,410.400 L40.200,403.400" stroke="#e01f26" stroke-width="1.500"/>
<!-- draw modes -->
<rect x="7.200" y="416.800" width="9.800" height="9.400" fill="#282828"/>
<g fill="none" stroke="#d4d4d4" stroke-width="1">
  <circle cx="11" cy="420.600" r="2.600"/><rect x="11.400" y="421" width="4" height="3.600" fill="#d4d4d4"/>
  <circle cx="23" cy="420.600" r="2.600"/><rect x="23.400" y="421" width="4" height="3.600" fill="#d4d4d4"/>
</g>
<g fill="none" stroke="#5e5e5e" stroke-width="1"><circle cx="35.600" cy="421.200" r="2.600"/><circle cx="35.600" cy="421.200" r="0.800"/></g>
<!-- screen mode -->
<g fill="#4a4a4a" stroke="#cfcfcf" stroke-width="1">
  <rect x="22.400" y="432.400" width="9" height="6.200"/>
  <rect x="17.800" y="435.400" width="9" height="6.200"/>
</g>
</svg>
  <div id="rpanel" class="abs"></div>

  <!-- right panel content -->
  <div class="abs" style="left:674px;top:28px;width:156px;height:16px;background:#2c2c2c"></div>
  <div class="abs" style="left:674px;top:28px;width:39px;height:16px;background:#383838"></div>
  <div class="t" style="left:679.5px;top:31.5px;font-weight:bold;color:#f2f2f2;letter-spacing:-0.2px;transform:scaleX(.83)">Properties</div>
  <div class="t" style="left:719.5px;top:31.5px;color:#b4b4b4;transform:scaleX(.8)">Layers</div>
  <div class="t" style="left:748px;top:31.5px;color:#b4b4b4">Libraries</div>
  <svg class="abs" style="left:818px;top:21px" width="8" height="6" viewBox="0 0 8 6"><path d="M1,1 L3,3 L1,5 M4.200,1 L6.200,3 L4.200,5" fill="none" stroke="#c8c8c8" stroke-width="1"/></svg>
  <div class="t" style="left:680px;top:50.500px;color:#cdcdcd;word-spacing:1px">Clip Group</div>
  <div class="sep" style="top:65px"></div>
  <div class="t" style="left:680px;top:70px;color:#b8b8b8">Transform</div>
  <!-- reference point icon -->
  <svg class="abs" style="left:679px;top:91px" width="14" height="14" viewBox="0 0 14 14">
    <g fill="none" stroke="#d0d0d0" stroke-width="0.900">
      <rect x="1" y="1" width="3" height="3"/><rect x="5.500" y="1" width="3" height="3"/><rect x="10" y="1" width="3" height="3"/>
      <rect x="1" y="5.500" width="3" height="3"/><rect x="10" y="5.500" width="3" height="3"/>
      <rect x="1" y="10" width="3" height="3"/><rect x="5.500" y="10" width="3" height="3"/><rect x="10" y="10" width="3" height="3"/>
    </g>
    <rect x="5.300" y="5.300" width="3.400" height="3.400" fill="#ffffff"/>
  </svg>
  <div class="t" style="left:701px;top:85.500px;color:#b8b8b8">X:</div>
  <div class="inp" style="left:709px;top:85px;width:33px;height:11px"></div>
  <div class="t" style="left:711.500px;top:85.500px;color:#e8e8e8;font-weight:bold;font-size:7.100px;letter-spacing:-0.2px;transform:scaleX(.86)">444,659 pt</div>
  <div class="t" style="left:701px;top:101.500px;color:#b8b8b8">Y:</div>
  <div class="inp" style="left:709px;top:101px;width:33px;height:11px"></div>
  <div class="t" style="left:711.500px;top:101.500px;color:#e8e8e8;font-weight:bold;font-size:7.100px;letter-spacing:-0.2px;transform:scaleX(.86)">290,19 pt</div>
  <div class="t" style="left:751.500px;top:85.500px;color:#b8b8b8">W:</div>
  <div class="inp" style="left:762px;top:85px;width:33px;height:11px"></div>
  <div class="t" style="left:764.500px;top:85.500px;color:#e8e8e8;font-weight:bold;font-size:7.100px;letter-spacing:-0.2px;transform:scaleX(.86)">510,268 pt</div>
  <div class="t" style="left:752.500px;top:101.500px;color:#b8b8b8">H:</div>
  <div class="inp" style="left:762px;top:101px;width:33px;height:11px"></div>
  <div class="t" style="left:764.500px;top:101.500px;color:#e8e8e8;font-weight:bold;font-size:7.100px;letter-spacing:-0.2px;transform:scaleX(.86)">510,27 pt</div>
  <!-- link icon -->
  <svg class="abs" style="left:801px;top:92px" width="13" height="13" viewBox="0 0 13 13">
    <g fill="none" stroke="#d4d4d4" stroke-width="1.300" stroke-linecap="round">
      <path d="M5.200,5.800 L4,4.200 C3.200,3 4.800,1.600 5.800,2.600 L7,4"/>
      <path d="M7.600,7.400 L8.800,9 C9.600,10.200 8,11.600 7,10.600 L5.800,9.200"/>
      <path d="M2.600,2.200 L10.400,11" stroke-width="1.100"/>
    </g>
  </svg>
  <!-- angle -->
  <svg class="abs" style="left:696px;top:117px" width="12" height="10" viewBox="0 0 12 10"><path d="M6.600,1.400 L1,8 L7.600,8" fill="none" stroke="#d0d0d0" stroke-width="1.100"/><path d="M4.200,4.600 Q6,5.800 5.800,8" fill="none" stroke="#d0d0d0" stroke-width="0.900"/><rect x="9.300" y="3.600" width="1.100" height="1.100" fill="#d0d0d0"/><rect x="9.300" y="6.800" width="1.100" height="1.100" fill="#d0d0d0"/></svg>
  <div class="inp" style="left:709px;top:117.500px;width:22.500px;height:10px"></div>
  <div class="t" style="left:711.500px;top:117.500px;color:#e0e0e0">0°</div>
  <div class="inp" style="left:732px;top:117.500px;width:10px;height:10px;background:#2b2b2b"></div>
  <svg class="abs" style="left:733px;top:119.500px" width="8" height="6" viewBox="0 0 8 6"><path d="M1,1.400 L3.800,4.200 L6.600,1.400" fill="none" stroke="#e0e0e0" stroke-width="1.200"/></svg>
  <!-- flip icons -->
  <svg class="abs" style="left:763px;top:118px" width="30" height="10" viewBox="763 118 30 10">
    <path d="M764,119.500 L767.400,122.700 L764,126 Z M773,119.500 L769.600,122.700 L773,126 Z" fill="#d6d6d6"/><rect x="768" y="119" width="1" height="7.500" fill="#d6d6d6"/>
    <path d="M782.800,119 L789.600,119 L786.200,122 Z M782.800,127 L789.600,127 L786.200,124 Z" fill="#d6d6d6"/><rect x="782.400" y="122.500" width="7.600" height="1" fill="#d6d6d6"/>
  </svg>
  <div class="dots" style="left:810px;top:135.5px"><i style="left:0"></i><i style="left:3.3px"></i><i style="left:6.6px"></i></div>
  <div class="sep" style="top:144px"></div>
  <div class="t" style="left:680px;top:150px;color:#b8b8b8">Appearance</div>
  <!-- fill -->
  <div class="abs" style="left:680.500px;top:165px;width:10.500px;height:10.500px;background:#242424;border:1px solid #3a3a3a;color:#fff;font-size:9px;font-weight:bold;line-height:9px;text-align:center;will-change:transform">?</div>
  <div class="t" style="left:698px;top:166px;color:#a4a4a4">Fill</div>
  <!-- stroke -->
  <svg class="abs" style="left:680px;top:183px" width="12" height="12" viewBox="0 0 12 12"><rect x="0.500" y="0.500" width="10.500" height="10.500" fill="#ffffff" stroke="#1e1e1e"/><rect x="3.600" y="3.600" width="4.300" height="4.300" fill="#202020"/><path d="M1,10.500 L10.500,1" stroke="#e0242b" stroke-width="1.500"/></svg>
  <div class="t" style="left:698.500px;top:183.500px;color:#f0f0f0;font-weight:bold;text-decoration:underline;text-decoration-thickness:0.700px;text-underline-offset:1px;letter-spacing:-0.2px;transform:scaleX(.8)">Stroke</div>
  <div class="inp" style="left:725px;top:182px;width:9.500px;height:12px;background:#2b2b2b"></div>
  <svg class="abs" style="left:726px;top:183px" width="8" height="10" viewBox="0 0 8 10"><path d="M1.200,3.600 L3.700,1.200 L6.200,3.600 M1.200,6.400 L3.700,8.800 L6.200,6.400" fill="none" stroke="#dcdcdc" stroke-width="1.100"/></svg>
  <div class="inp" style="left:735.500px;top:182px;width:20px;height:12px;background:#2c2c2c"></div>
  <div class="inp" style="left:756px;top:182px;width:10px;height:12px;background:#2b2b2b"></div>
  <svg class="abs" style="left:757px;top:185px" width="8" height="6" viewBox="0 0 8 6"><path d="M1,1.400 L3.800,4.200 L6.600,1.400" fill="none" stroke="#e0e0e0" stroke-width="1.200"/></svg>
  <!-- opacity -->
  <svg class="abs" style="left:680px;top:201px" width="12" height="12" viewBox="0 0 12 12"><rect x="0.500" y="0.500" width="10.500" height="10.500" fill="#4a4a4a" stroke="#9a9a9a" stroke-width="0.800"/><g fill="#a8a8a8"><circle cx="3.400" cy="3.400" r="1.300"/><circle cx="8" cy="3.400" r="1.300"/><circle cx="3.400" cy="8" r="1.300"/><circle cx="8" cy="8" r="1.300"/><circle cx="5.700" cy="5.700" r="1.100"/></g></svg>
  <div class="t" style="left:698.500px;top:201.500px;color:#f0f0f0;font-weight:bold;text-decoration:underline;text-decoration-thickness:0.700px;text-underline-offset:1px;letter-spacing:-0.2px;transform:scaleX(.8)">Opacity</div>
  <div class="inp" style="left:725px;top:200.500px;width:30.500px;height:11px;background:#2a2a2a"></div>
  <div class="t" style="left:727px;top:201.500px;color:#e6e6e6">100%</div>
  <svg class="abs" style="left:758px;top:202.500px" width="6" height="8" viewBox="0 0 6 8"><path d="M1.400,1 L4.200,3.800 L1.400,6.600" fill="none" stroke="#e0e0e0" stroke-width="1.200"/></svg>
  <div class="t" style="left:683.500px;top:218px;color:#d8d8d8;font-style:italic;font-size:9px;font-family:'Liberation Serif',serif">fx.</div>
  <div class="dots" style="left:810px;top:237px"><i style="left:0"></i><i style="left:3.3px"></i><i style="left:6.6px"></i></div>
  <div class="sep" style="top:245px"></div>
  <div class="t" style="left:680px;top:252px;color:#b8b8b8">Align</div>
  <!-- align icons -->
  <svg class="abs" style="left:680px;top:267px" width="130" height="13" viewBox="680 267 130 13">
    <rect x="682" y="269" width="8.500" height="8.500" fill="none" stroke="#cfcfcf" stroke-width="1" stroke-dasharray="1.500 1.200"/>
    <path d="M693,272.500 L695,274.500 L697,272.500" fill="none" stroke="#cfcfcf" stroke-width="0.900"/>
    <g fill="#d4d4d4">
      <rect x="705" y="268" width="1" height="11"/><rect x="707" y="270" width="5.500" height="3"/><rect x="707" y="274.500" width="8" height="3"/>
      <rect x="727.600" y="268" width="1" height="11"/><rect x="725.300" y="270" width="5.600" height="3"/><rect x="723.800" y="274.500" width="8.600" height="3"/>
      <rect x="751" y="268" width="1" height="11"/><rect x="744.500" y="270" width="5.500" height="3"/><rect x="742" y="274.500" width="8" height="3"/>
      <rect x="760" y="268" width="10.600" height="1"/><rect x="762" y="270" width="3" height="8"/><rect x="766.400" y="270" width="3" height="5"/>
      <rect x="777.600" y="273" width="11.400" height="1"/><rect x="779.800" y="269.200" width="3" height="8.600"/><rect x="784.400" y="270.700" width="3" height="5.600"/>
      <rect x="796" y="278" width="11.600" height="1"/><rect x="798.400" y="269" width="3" height="8"/><rect x="802.800" y="272" width="3" height="5"/>
    </g>
  </svg>
  <div class="dots" style="left:810px;top:288.3px"><i style="left:0"></i><i style="left:3.3px"></i><i style="left:6.6px"></i></div>
  <div class="sep" style="top:298px"></div>
  <div class="t" style="left:680px;top:302.500px;color:#b8b8b8">Pathfinder</div>
  <!-- pathfinder icons -->
  <svg class="abs" style="left:682px;top:319px" width="70" height="12" viewBox="682 319 70 12">
    <path d="M683.500,320 L689,320 L689,322.500 L692.500,322.500 L692.500,329.500 L686,329.500 L686,326.500 L683.500,326.500 Z" fill="#d6d6d6"/>
    <rect x="702.500" y="320.500" width="6" height="6" fill="#d6d6d6"/><rect x="705.500" y="323.500" width="6" height="6" fill="#333" stroke="#d6d6d6" stroke-width="1"/>
    <rect x="721.500" y="320.500" width="6" height="6" fill="none" stroke="#d6d6d6" stroke-width="1"/><rect x="724.500" y="323.500" width="6" height="6" fill="none" stroke="#d6d6d6" stroke-width="1"/><rect x="724.500" y="323.500" width="3" height="3" fill="#d6d6d6"/>
    <rect x="740.500" y="320.500" width="6.500" height="6.500" fill="#d6d6d6"/><rect x="743.500" y="323.500" width="6.500" height="6.500" fill="#d6d6d6"/><rect x="743.800" y="323.800" width="2.900" height="2.900" fill="#2a2a2a"/>
  </svg>
  <div class="abs" style="left:790px;top:319px;width:30.500px;height:12px;background:#3d3d3d;border-radius:1px;color:#585858;font-size:7.200px;line-height:12px;text-align:center;letter-spacing:-0.2px;will-change:transform">Expand</div>
  <div class="dots" style="left:810px;top:336.5px"><i style="left:0"></i><i style="left:3.3px"></i><i style="left:6.6px"></i></div>
  <div class="sep" style="top:345px"></div>
  <div class="t" style="left:680px;top:354px;color:#b8b8b8;word-spacing:1.500px">Quick Actions</div>
  <div class="btn" style="left:680px;top:368px;width:61.500px;height:12.500px"><span style="display:inline-block;transform:scaleX(.8)">Group</span></div>
  <div class="btn" style="left:747.500px;top:368px;width:61px;height:12.500px"><span style="display:inline-block;transform:scaleX(.8)">Ungroup</span></div>
  <div class="btn" style="left:680px;top:387px;width:61.500px;height:12.500px"><span style="display:inline-block;transform:scaleX(.8)">Isolate Group</span></div>
  <div class="btn" style="left:747.500px;top:387px;width:61px;height:12.500px"><span style="display:inline-block;transform:scaleX(.8)">Save as Symbol</span></div>
  <div class="btn" style="left:680px;top:405.500px;width:128.500px;height:12.500px"><span style="display:inline-block;transform:scaleX(.8)">Recolor</span></div>
</div>
</body>
</html>
